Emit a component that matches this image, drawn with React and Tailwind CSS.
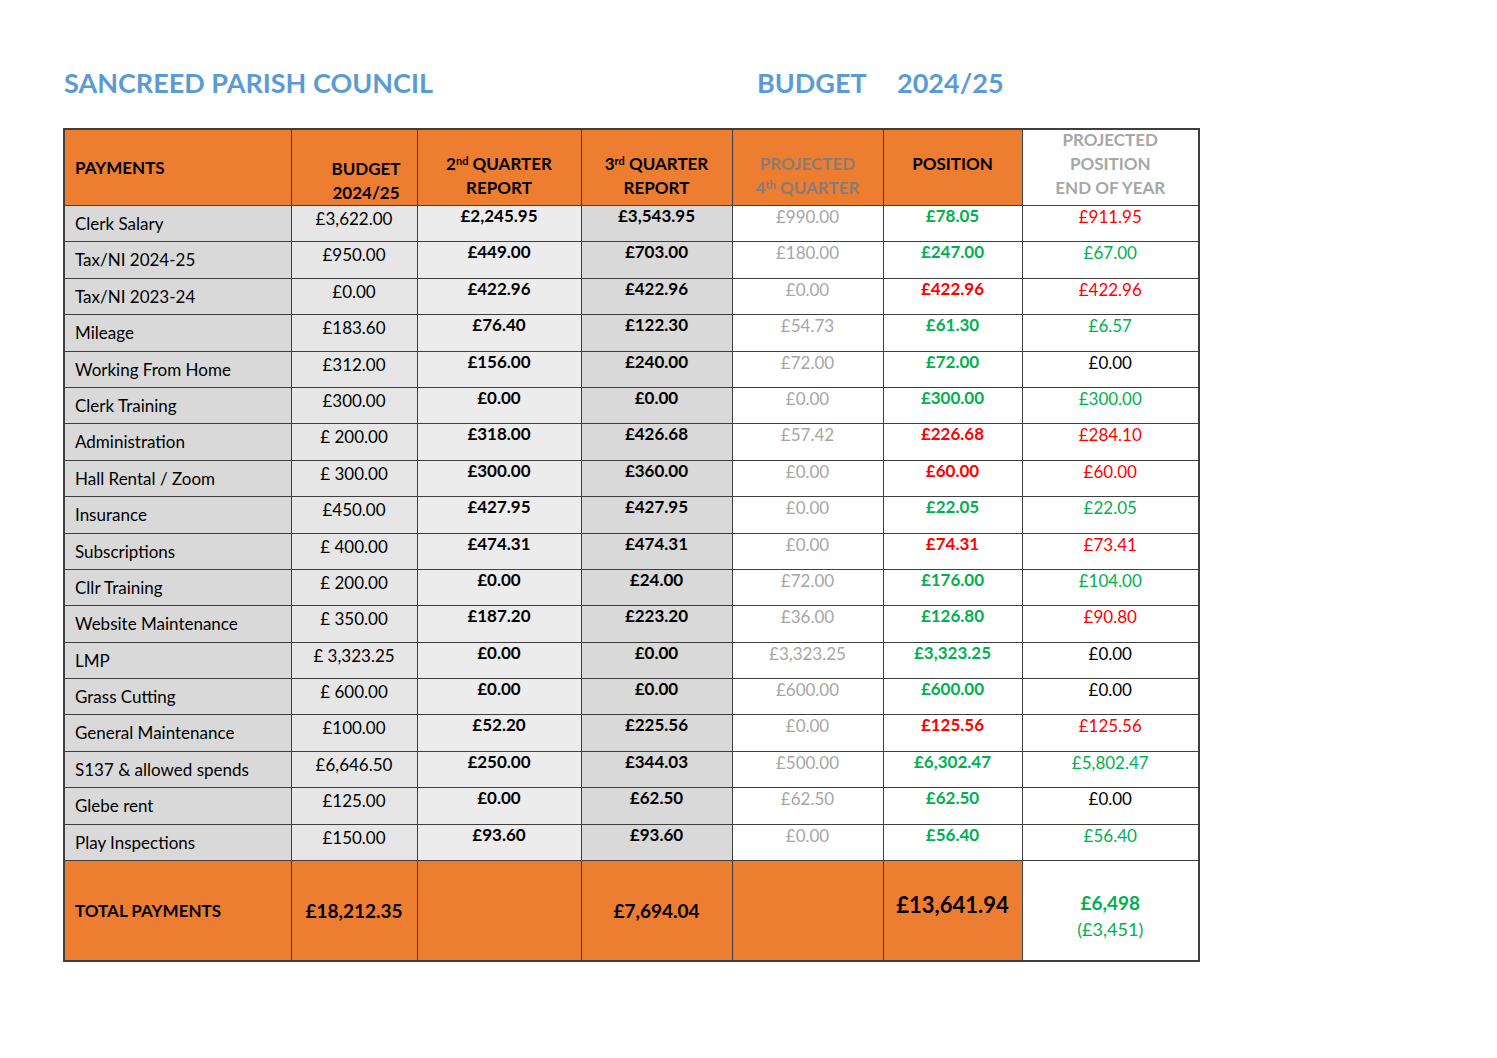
const rows = [
  ["Clerk Salary", "£3,622.00", "£2,245.95", "£3,543.95", "£990.00", ["£78.05", "g"], ["£911.95", "r"]],
  ["Tax/NI 2024-25", "£950.00", "£449.00", "£703.00", "£180.00", ["£247.00", "g"], ["£67.00", "g"]],
  ["Tax/NI 2023-24", "£0.00", "£422.96", "£422.96", "£0.00", ["£422.96", "r"], ["£422.96", "r"]],
  ["Mileage", "£183.60", "£76.40", "£122.30", "£54.73", ["£61.30", "g"], ["£6.57", "g"]],
  ["Working From Home", "£312.00", "£156.00", "£240.00", "£72.00", ["£72.00", "g"], ["£0.00", "k"]],
  ["Clerk Training", "£300.00", "£0.00", "£0.00", "£0.00", ["£300.00", "g"], ["£300.00", "g"]],
  ["Administration", "£ 200.00", "£318.00", "£426.68", "£57.42", ["£226.68", "r"], ["£284.10", "r"]],
  ["Hall Rental / Zoom", "£ 300.00", "£300.00", "£360.00", "£0.00", ["£60.00", "r"], ["£60.00", "r"]],
  ["Insurance", "£450.00", "£427.95", "£427.95", "£0.00", ["£22.05", "g"], ["£22.05", "g"]],
  ["Subscriptions", "£ 400.00", "£474.31", "£474.31", "£0.00", ["£74.31", "r"], ["£73.41", "r"]],
  ["Cllr Training", "£ 200.00", "£0.00", "£24.00", "£72.00", ["£176.00", "g"], ["£104.00", "g"]],
  ["Website Maintenance", "£ 350.00", "£187.20", "£223.20", "£36.00", ["£126.80", "g"], ["£90.80", "r"]],
  ["LMP", "£ 3,323.25", "£0.00", "£0.00", "£3,323.25", ["£3,323.25", "g"], ["£0.00", "k"]],
  ["Grass Cutting", "£ 600.00", "£0.00", "£0.00", "£600.00", ["£600.00", "g"], ["£0.00", "k"]],
  ["General Maintenance", "£100.00", "£52.20", "£225.56", "£0.00", ["£125.56", "r"], ["£125.56", "r"]],
  ["S137 & allowed spends", "£6,646.50", "£250.00", "£344.03", "£500.00", ["£6,302.47", "g"], ["£5,802.47", "g"]],
  ["Glebe rent", "£125.00", "£0.00", "£62.50", "£62.50", ["£62.50", "g"], ["£0.00", "k"]],
  ["Play Inspections", "£150.00", "£93.60", "£93.60", "£0.00", ["£56.40", "g"], ["£56.40", "g"]],
];

const tone = { g: "text-[#00b050]", r: "text-[#ff0000]", k: "text-black" };
const cell = "border border-[#3f3f3f] p-0";
const top = `${cell} align-top`;
const mid = `${cell} align-middle`;

export default function App() {
  return (
    <div className="min-h-screen bg-white font-['Lato','Liberation_Sans',sans-serif] text-black">
      <div className="pl-[63px] pt-[64px]">
        <div className="flex items-center text-[27px] font-bold leading-[38px] text-[#5b9bd5]">
          <span className="w-[694px] pl-[1px]">SANCREED PARISH COUNCIL</span>
          <span className="w-[140px]">BUDGET</span>
          <span>2024/25</span>
        </div>

        <table className="mt-[26px] table-fixed border-collapse border-2 border-[#3f3f3f]">
          <colgroup>
            <col className="w-[227px]" />
            <col className="w-[126px]" />
            <col className="w-[164px]" />
            <col className="w-[151px]" />
            <col className="w-[151px]" />
            <col className="w-[139px]" />
            <col className="w-[177px]" />
          </colgroup>
          <thead>
            <tr className="h-[75px] text-[17px] font-bold leading-[24px]">
              <th className={`${mid} bg-[#ed7d31] pl-[10px] text-left`}>PAYMENTS</th>
              <th className={`${top} bg-[#ed7d31] pl-[24px] pt-[27px] text-center`}>
                BUDGET
                <br />
                2024/25
              </th>
              <th className={`${top} bg-[#ed7d31] pt-[22px] text-center`}>
                2<sup className="text-[11px]">nd</sup> QUARTER
                <br />
                REPORT
              </th>
              <th className={`${top} bg-[#ed7d31] pt-[22px] text-center`}>
                3<sup className="text-[11px]">rd</sup> QUARTER
                <br />
                REPORT
              </th>
              <th className={`${top} bg-[#ed7d31] pt-[22px] text-center text-[#887d76]`}>
                PROJECTED
                <br />
                4<sup className="text-[11px]">th</sup> QUARTER
              </th>
              <th className={`${top} bg-[#ed7d31] pt-[22px] text-center`}>POSITION</th>
              <th className={`${top} bg-white pt-0 text-center text-[#a6a6a6]`}>
                <div className="-mt-[2px]">
                  PROJECTED
                  <br />
                  POSITION
                  <br />
                  END OF YEAR
                </div>
              </th>
            </tr>
          </thead>
          <tbody className="text-[17px] leading-[19px]">
            {rows.map((r) => (
              <tr key={r[0]} className="h-[36.4px]">
                <td className={`${top} bg-[#d9d9d9] pl-[10px] pt-[8px]`}>{r[0]}</td>
                <td className={`${top} bg-[#e7e6e6] pt-[3px] text-center`}>{r[1]}</td>
                <td className={`${top} bg-[#ececec] pt-0 text-center font-bold`}>{r[2]}</td>
                <td className={`${top} bg-[#d9d9d9] pt-0 text-center font-bold`}>{r[3]}</td>
                <td className={`${top} bg-white pt-[1px] text-center text-[#a6a6a6]`}>{r[4]}</td>
                <td className={`${top} bg-white pt-0 text-center font-bold ${tone[r[5][1]]}`}>{r[5][0]}</td>
                <td className={`${top} bg-white pt-[1px] text-center ${tone[r[6][1]]}`}>{r[6][0]}</td>
              </tr>
            ))}
            <tr className="h-[100px] font-bold">
              <td className={`${mid} bg-[#ed7d31] pl-[10px] text-[17px]`}>TOTAL PAYMENTS</td>
              <td className={`${mid} bg-[#ed7d31] text-center text-[19px]`}>£18,212.35</td>
              <td className={`${mid} bg-[#ed7d31]`}></td>
              <td className={`${mid} bg-[#ed7d31] text-center text-[19px]`}>£7,694.04</td>
              <td className={`${mid} bg-[#ed7d31]`}></td>
              <td className={`${mid} bg-[#ed7d31] pb-[12px] text-center text-[22px]`}>£13,641.94</td>
              <td className={`${mid} bg-white pt-[12px] text-center text-[#00b050]`}>
                <div className="text-[19px] leading-[26px]">£6,498</div>
                <div className="text-[18px] font-normal leading-[26px]">(£3,451)</div>
              </td>
            </tr>
          </tbody>
        </table>
      </div>
    </div>
  );
}
